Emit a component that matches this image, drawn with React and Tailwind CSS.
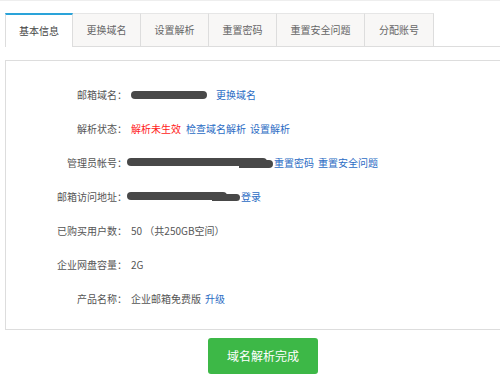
import React from "react";

const tabs = ["基本信息", "更换域名", "设置解析", "重置密码", "重置安全问题", "分配账号"];
const tabW = ["w-[68px]", "w-[68px]", "w-[68px]", "w-[68px]", "w-[88px]", "w-[69px]"];

function Row({ label, children }) {
  return (
    <div className="flex items-center h-[34px]">
      <div className="w-[121px] text-right text-[#555]">{label}</div>
      <div className="ml-[4px] flex items-center text-[#555]">{children}</div>
    </div>
  );
}

export default function App() {
  return (
    <div
      className="w-[500px] h-[378px] overflow-hidden bg-white text-[10px] leading-none border-t border-[#eee]"
      style={{ fontFamily: '"Noto Sans CJK SC", "Noto Sans", sans-serif' }}
    >
      <div className="pt-[12px] flex">
        <div className="w-[5px] shrink-0" />
        {tabs.map((t, i) => (
          <div
            key={t}
            className={`${tabW[i]} h-[34px] flex items-center justify-center shrink-0 border-r border-[#ddd] ${
              i === 0
                ? "bg-white border-l border-t-2 border-t-[#2aa3d9] text-[#444]"
                : "bg-[#f8f7f6] border-t border-t-[#e6e6e6] border-b border-b-[#ddd] text-[#666]"
            }`}
          >
            {t}
          </div>
        ))}
        <div className="flex-1 border-b border-[#ddd]" />
      </div>

      <div className="mt-[13px] ml-[5px] w-[500px] h-[270px] border border-[#ddd] pt-[17px]">
        <Row label="邮箱域名：">
          <span className="inline-block w-[76px] h-[8px] rounded-full bg-[#484848] mr-[9px]" />
          <span className="text-[#2b6cc4]">更换域名</span>
        </Row>
        <Row label="解析状态：">
          <span className="text-[#ff1a1a]">解析未生效</span>
          <span className="text-[#2b6cc4] ml-[5px]">检查域名解析</span>
          <span className="text-[#2b6cc4] ml-[4px]">设置解析</span>
        </Row>
        <Row label="管理员帐号：">
          <span className="relative inline-block w-[146px] h-[10px] -ml-[4px]">
            <span className="absolute left-0 top-0 w-[140px] h-[8px] rounded-full bg-[#484848]" />
            <span className="absolute right-0 top-[2px] w-[34px] h-[8px] rounded-r-full bg-[#484848]" />
          </span>
          <span className="text-[#2b6cc4] ml-[1px]">重置密码</span>
          <span className="text-[#2b6cc4] ml-[4px]">重置安全问题</span>
        </Row>
        <Row label="邮箱访问地址：">
          <span className="relative inline-block w-[113px] h-[10px] -ml-[4px]">
            <span className="absolute left-0 top-0 w-[100px] h-[8px] rounded-full bg-[#484848]" />
            <span className="absolute right-0 top-[2px] w-[28px] h-[7px] rounded-r-full bg-[#484848]" />
          </span>
          <span className="text-[#2b6cc4] ml-[1px]">登录</span>
        </Row>
        <Row label="已购买用户数：">
          <span>50 （共250GB空间）</span>
        </Row>
        <Row label="企业网盘容量：">
          <span>2G</span>
        </Row>
        <Row label="产品名称：">
          <span>企业邮箱免费版</span>
          <span className="text-[#2b6cc4] ml-[4px]">升级</span>
        </Row>
      </div>

      <div className="flex justify-center pt-[8px] pl-[26px]">
        <button className="w-[110px] h-[36px] rounded-[3px] bg-[#3db847] text-white text-[12px]">
          域名解析完成
        </button>
      </div>
    </div>
  );
}
